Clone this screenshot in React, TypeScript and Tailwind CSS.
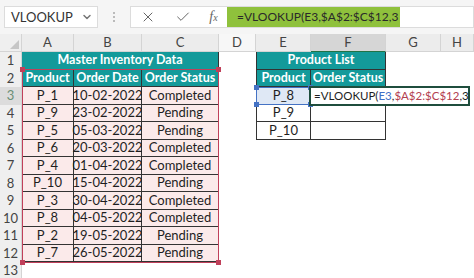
import { Check, X, ChevronDown } from 'lucide-react';

const master = [
  ['P_1', '10-02-2022', 'Completed'],
  ['P_9', '23-02-2022', 'Pending'],
  ['P_5', '05-03-2022', 'Pending'],
  ['P_6', '20-03-2022', 'Completed'],
  ['P_4', '01-04-2022', 'Completed'],
  ['P_10', '15-04-2022', 'Pending'],
  ['P_3', '30-04-2022', 'Completed'],
  ['P_8', '04-05-2022', 'Completed'],
  ['P_2', '19-05-2022', 'Pending'],
  ['P_7', '26-05-2022', 'Pending'],
];

const lookup = ['P_8', 'P_9', 'P_10'];

const cols = ['A', 'B', 'C', 'D', 'E', 'F', 'G', 'H'];

const teal = 'bg-[#139a9a] text-white font-bold text-[12.5px]';
const edge = 'border-[#333]';

const Blank = () => <div className="h-[17.5px]" />;

const RowNum = ({ n }: { n: number }) => (
  <div
    className={`h-[17.5px] flex items-center justify-center border-r border-[#d4d4d4] ${
      n === 3 ? 'bg-[#dcdcdc] text-[#6b8f76]' : 'bg-[#efefef] text-[#444]'
    }`}
  >
    {n}
  </div>
);

const App = () => {
  return (
    <div className="w-[474px] h-[278px] overflow-hidden bg-white text-[13px] text-[#1e1e1e] font-['Lato','Open_Sans',sans-serif] leading-none whitespace-nowrap">
      {/* formula bar */}
      <div className="h-[34px] bg-[#f5f5f5] flex items-center pl-[4px] gap-[6px]">
        <div className="w-[94px] h-[22px] bg-white border border-[#dcdcdc] flex items-center justify-between pl-[6px] pr-[4px] text-[13px] text-[#333]">
          <span>VLOOKUP</span>
          <ChevronDown className="w-3 h-3 text-[#777]" strokeWidth={3} />
        </div>
        <div className="w-[20px] flex flex-col items-center gap-[2px]">
          <span className="w-[2px] h-[2px] bg-[#bbb]" />
          <span className="w-[2px] h-[2px] bg-[#bbb]" />
          <span className="w-[2px] h-[2px] bg-[#bbb]" />
        </div>
        <div className="h-[22px] flex-1 bg-white border border-[#dcdcdc] flex items-center">
          <div className="w-[96px] flex items-center justify-around text-[#666]">
            <X className="w-4 h-4" strokeWidth={1.5} />
            <Check className="w-4 h-4" strokeWidth={1.5} />
            <span className="font-['Liberation_Serif',serif] italic text-[14px]">
              f<span className="text-[10px]">x</span>
            </span>
          </div>
          <div className="h-full bg-[#8fc13c] flex items-center pl-[10px] pr-[2px] text-[12px] text-[#2a2a2a]">
            =VLOOKUP(E3,$A$2:$C$12,3
          </div>
        </div>
      </div>

      {/* sheet */}
      <div className="relative grid grid-cols-[22px_52px_68px_77px_37px_55px_75px_55px_1fr] text-center">
        {/* column headers */}
        <div className="h-[18px] bg-[#efefef] border-r border-b border-[#d4d4d4] flex items-end justify-end p-[2px]">
          <div className="w-0 h-0 border-l-[9px] border-l-transparent border-b-[9px] border-b-[#c6c6c6]" />
        </div>
        {cols.map((c) => (
          <div
            key={c}
            className={`h-[18px] flex items-center justify-center border-r border-b border-[#d4d4d4] text-[#444] ${
              c === 'F' ? 'bg-[#d6d6d6] border-b-[#217346]' : c === 'D' ? 'bg-[#f7f7f7]' : 'bg-[#ececec]'
            }`}
          >
            {c}
          </div>
        ))}

        {/* row 1 */}
        <RowNum n={1} />
        <div className={`col-span-3 h-[17.5px] flex items-center justify-center border-r border-b ${edge} ${teal}`}>
          Master Inventory Data
        </div>
        <Blank />
        <div className={`col-span-2 h-[17.5px] flex items-center justify-center border-l border-r border-b ${edge} ${teal}`}>
          Product List
        </div>
        <Blank />
        <Blank />

        {/* row 2 */}
        <RowNum n={2} />
        {['Product', 'Order Date', 'Order Status'].map((h) => (
          <div key={h} className={`h-[17.5px] flex items-center justify-center border-r border-b ${edge} ${teal}`}>
            {h}
          </div>
        ))}
        <Blank />
        <div className={`h-[17.5px] flex items-center justify-center border-l border-r border-b ${edge} ${teal}`}>Product</div>
        <div className={`h-[17.5px] flex items-center justify-center border-r border-b ${edge} ${teal}`}>Order Status</div>
        <Blank />
        <Blank />

        {/* data rows */}
        {master.map((r, i) => (
          <div key={i} className="contents">
            <RowNum n={i + 3} />
            {r.map((v, j) => (
              <div key={j} className={`h-[17.5px] flex items-center justify-center bg-[#fbeaea] border-r border-b ${edge}`}>
                {v}
              </div>
            ))}
            <Blank />
            {i < 3 ? (
              <>
                <div
                  className={`h-[17.5px] flex items-center justify-center border-l border-r border-b ${edge} ${
                    i === 0 ? 'bg-[#dfe8f5]' : 'bg-white'
                  }`}
                >
                  {lookup[i]}
                </div>
                <div className={`h-[17.5px] border-r border-b ${edge}`} />
              </>
            ) : (
              <>
                <Blank />
                <Blank />
              </>
            )}
            <Blank />
            <Blank />
          </div>
        ))}
        <RowNum n={13} />

        {/* copy range A2:C12 */}
        <div className="absolute left-[22px] top-[35px] w-[197px] h-[193.5px] border border-[#c0405a] pointer-events-none">
          <span className="absolute -left-[3px] -top-[3px] w-[5px] h-[5px] bg-[#c0405a]" />
          <span className="absolute -right-[3px] -top-[3px] w-[5px] h-[5px] bg-[#c0405a]" />
          <span className="absolute -left-[3px] -bottom-[3px] w-[5px] h-[5px] bg-[#c0405a]" />
          <span className="absolute -right-[3px] -bottom-[3px] w-[5px] h-[5px] bg-[#c0405a]" />
        </div>

        {/* reference E3 */}
        <div className="absolute left-[256px] top-[53px] w-[55px] h-[18px] border border-[#4472c4] pointer-events-none">
          <span className="absolute -left-[3px] -top-[3px] w-[5px] h-[5px] bg-[#4472c4]" />
          <span className="absolute -right-[3px] -top-[3px] w-[5px] h-[5px] bg-[#4472c4]" />
          <span className="absolute -left-[3px] -bottom-[3px] w-[5px] h-[5px] bg-[#4472c4]" />
          <span className="absolute -right-[3px] -bottom-[3px] w-[5px] h-[5px] bg-[#4472c4]" />
        </div>

        {/* active cell F3 in edit mode */}
        <div className="absolute left-[309px] top-[52px] w-[161px] h-[20px] bg-white border-2 border-[#1f4e3d] flex items-center pl-[3px] text-left text-[11.5px]">
          <span>
            =VLOOKUP(<span className="text-[#3f6fc6]">E3</span>,<span className="text-[#b3404f]">$A$2:$C$12</span>,3
          </span>
        </div>
      </div>
    </div>
  );
};

export default App;
